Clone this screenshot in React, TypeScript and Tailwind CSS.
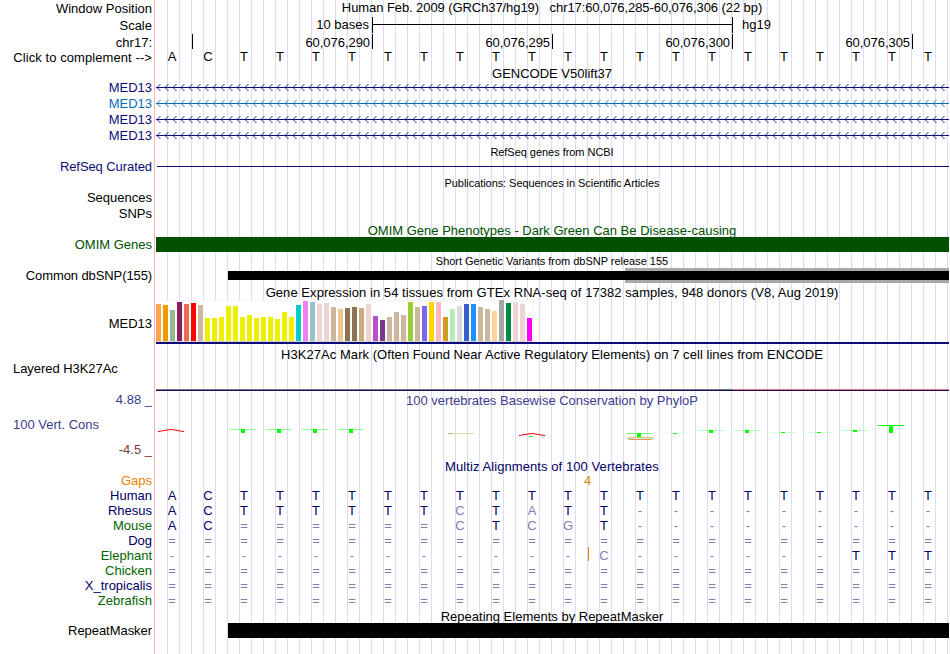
import React from "react";
import { clsx } from "clsx";

const GTEX: [number, string][] = [
  [37, "#ffa54f"], [36, "#ee9a00"], [31, "#8fbc8f"], [39, "#8b1c62"], [37, "#ee6a50"], [38, "#ff0000"],
  [36, "#cdb79e"], [23, "#eeee00"], [23, "#eeee00"], [24, "#eeee00"], [35, "#eeee00"], [35, "#eeee00"],
  [24, "#eeee00"], [26, "#eeee00"], [23, "#eeee00"], [24, "#eeee00"], [24, "#eeee00"], [22, "#eeee00"],
  [29, "#eeee00"], [24, "#eeee00"], [36, "#00cdcd"], [40, "#ee82ee"], [39, "#9ac0cd"], [37, "#eed5d2"],
  [38, "#eed5d2"], [34, "#cdb79e"], [32, "#eec591"], [33, "#8b7355"], [34, "#8b7355"], [33, "#cdaa7d"],
  [37, "#eed5d2"], [25, "#b452cd"], [21, "#7a378b"], [24, "#cdb79e"], [29, "#cdb79e"], [26, "#cdb79e"],
  [39, "#9acd32"], [34, "#cdb79e"], [35, "#7a67ee"], [39, "#ffd700"], [39, "#ffb6c1"], [24, "#cd9b1d"],
  [32, "#b4eeb4"], [35, "#d9d9d9"], [37, "#3a5fcd"], [37, "#1e90ff"], [34, "#cdb79e"], [32, "#cdb79e"],
  [30, "#ffd39b"], [41, "#a6a6a6"], [38, "#008b45"], [39, "#eed5d2"], [37, "#eed5d2"], [23, "#ff00ff"],
];

// lower case bases differ from the human sequence and are drawn dimmed
const ALIGNMENTS = [
  { name: "Human", seq: "ACTTTTTTTTTTTTTTTTTTTT", color: "text-[#000064]" },
  { name: "Rhesus", seq: "ACTTTTTTcTaTT---------", color: "text-[#000064]" },
  { name: "Mouse", seq: "AC======cTcgT---------", color: "text-[#006400]" },
  { name: "Dog", seq: "======================", color: "text-[#000064]" },
  { name: "Elephant", seq: "------------c------TTT", color: "text-[#006400]", insertAfter: 12 },
  { name: "Chicken", seq: "======================", color: "text-[#006400]" },
  { name: "X_tropicalis", seq: "======================", color: "text-[#000064]" },
  { name: "Zebrafish", seq: "======================", color: "text-[#006400]" },
];

const GENES = [
  { color: "#0c0c78", text: "text-[#0c0c78]" },
  { color: "#0c6cb4", text: "text-[#0c6cb4]" },
  { color: "#0c0c78", text: "text-[#0c0c78]" },
  { color: "#0c0c78", text: "text-[#0c0c78]" },
];

// x, top, height of the block and opacity of the line above it
const PHYLOP: [number, number, number, number][] = [
  [89, 38, 4, 0.45], [125, 38, 4, 0.45], [161, 38, 4, 0.45], [197, 38, 4, 0.45],
  [485, 42, 4, 0.55], [521, 42, 1, 0.12], [557, 39, 3, 0.25], [593, 39, 3, 0.25],
  [629, 41, 1, 0.15], [665, 41, 1, 0.15], [701, 39, 2, 0.25], [737, 34, 8, 1],
];

interface RowProps {
  className: string;
  label?: React.ReactNode;
  labelClass?: string;
  children?: React.ReactNode;
}

const Row = ({ className, label, labelClass, children }: RowProps) => (
  <div className={clsx("flex shrink-0", className)}>
    <div className={clsx("w-[154px] shrink-0 pr-[2px] text-right", labelClass)}>{label}</div>
    <div className="w-[795px] shrink-0">{children}</div>
  </div>
);

const Title = ({ className, children }: { className?: string; children: React.ReactNode }) => (
  <div className={clsx("pl-px text-center", className)}>{children}</div>
);

const Bases = ({ seq, color, dim }: { seq: string; color: string; dim?: string }) => (
  <div className="flex">
    {seq.split("").map((base, i) => (
      <span key={i} className={clsx("w-9 shrink-0 text-center", /[A-Z]/.test(base) ? color : dim)}>
        {base.toUpperCase()}
      </span>
    ))}
  </div>
);

const GeneLine = ({ color }: { color: string }) => {
  let arrows = "";
  for (let x = 3; x < 790; x += 8) {
    arrows += `M${x + 3.5} 4L${x} 7.5L${x + 3.5} 11`;
  }
  return (
    <svg width="795" height="16" className="block" fill="none" stroke={color}>
      <path d="M2 7.5H795" />
      <path d={arrows} strokeWidth="0.9" />
    </svg>
  );
};

const GtexChart = () => (
  <div className="pl-[2px]">
    <div className="flex h-[42px] w-[378px] items-end gap-[2px] border border-l-0 border-[#f3f3f3] border-b-[#d3d3d3] bg-white">
      {GTEX.map(([height, color], i) => (
        <div key={i} className="w-[5px] shrink-0" style={{ height, backgroundColor: color }} />
      ))}
    </div>
    <div className="h-[2px] bg-[#0c0c78]" />
  </div>
);

const Conservation = () => (
  <svg width="795" height="68" className="-mt-[17px] block" fill="none">
    {PHYLOP.map(([x, top, height, opacity]) => (
      <g key={x} fill="#00ff00">
        <rect x={x - 13} y={top} width="26" height="1" opacity={opacity} />
        <rect x={x - 2} y={top} width="4" height={height} />
      </g>
    ))}
    <path d="M4 40.6L13 39L17 38.5L21 39L30 40.6" stroke="#ff0000" />
    <path d="M365 44.6L374 43L378 42.5L382 43L391 44.6" stroke="#ff0000" />
    <rect x="375" y="45" width="4" height="1" fill="#00ff00" />
    <path d="M294 42.5H320" stroke="#b4b464" strokeOpacity="0.5" />
    <path d="M294 42.5H299" stroke="#a0a03c" strokeOpacity="0.6" />
    <path d="M473 47.5L477 46.5H497L500 47.5L497 48.5H477Z" fill="#e6e6c8" stroke="#b4aa46" strokeOpacity="0.6" />
    <path d="M475 48.5H497" stroke="#e66e50" strokeOpacity="0.6" />
  </svg>
);

const App = () => {
  return (
    <div className="relative isolate flex h-[654px] w-[950px] flex-col overflow-hidden bg-white font-['Liberation_Sans',sans-serif] text-[13px] leading-[15px] whitespace-pre text-black">
      {/* guidelines */}
      <div className="absolute inset-y-0 left-[154px] -z-10 w-px bg-[#ffb4b4]" />
      <div className="absolute inset-y-0 right-0 left-[167px] -z-10 bg-[repeating-linear-gradient(90deg,#dcdcfa_0px,#dcdcfa_1px,transparent_1px,transparent_12px)]" />

      <Row className="h-[17px]" label="Window Position" labelClass="pt-px">
        <Title className="tracking-[-0.08px]">
          {"Human Feb. 2009 (GRCh37/hg19)   chr17:60,076,285-60,076,306 (22 bp)"}
        </Title>
      </Row>
      <Row className="h-[17px]" label="Scale" labelClass="pt-px">
        <div className="flex">
          <div className="w-[218px] pr-[3px] text-right">10 bases</div>
          <div className="h-4 w-[361px] border-x border-black pt-[7px]">
            <div className="h-px w-full bg-black" />
          </div>
          <div className="pl-[9px]">hg19</div>
        </div>
      </Row>
      <Row className="h-[15px]" label="chr17:" labelClass="pt-px">
        <div className="flex h-[15px]">
          <div className="w-[39px] border-r border-black" />
          {["60,076,290", "60,076,295", "60,076,300", "60,076,305"].map((pos) => (
            <div key={pos} className="w-[180px] border-r border-black pt-px pr-[2px] text-right tracking-[-0.05px]">
              {pos}
            </div>
          ))}
        </div>
      </Row>
      <Row className="h-[17px]" label="Click to complement -->" labelClass="pt-px tracking-[0.08px]">
        <Bases seq="ACTTTTTTTTTTTTTTTTTTTT" color="text-black" />
      </Row>

      <Row className="h-[14px]">
        <Title>GENCODE V50lift37</Title>
      </Row>
      {GENES.map((gene, i) => (
        <Row key={i} className="h-4" label="MED13" labelClass={gene.text}>
          <GeneLine color={gene.color} />
        </Row>
      ))}

      <Row className="h-[15px]">
        <Title className="pt-px text-[11px] tracking-[-0.04px]">RefSeq genes from NCBI</Title>
      </Row>
      <Row className="h-[15px]" label="RefSeq Curated" labelClass="text-[#0c0c78] tracking-[-0.08px]">
        <div className="mt-[7px] ml-[3px] h-px bg-[#0c0c78]" />
      </Row>

      <Row className="h-4">
        <Title className="pt-[2px] text-[11px] tracking-[-0.06px]">Publications: Sequences in Scientific Articles</Title>
      </Row>
      <Row className="h-4" label="Sequences" />
      <Row className="h-4" label="SNPs" />

      <Row className="h-[15px]">
        <Title className="pt-px text-[#005000]">OMIM Gene Phenotypes - Dark Green Can Be Disease-causing</Title>
      </Row>
      <Row className="h-[15px]" label="OMIM Genes" labelClass="text-[#005000]">
        <div className="ml-[2px] h-[15px] bg-[#005000]" />
      </Row>

      <Row className="h-4">
        <Title className="pt-[2px] text-[11px] tracking-[-0.02px]">Short Genetic Variants from dbSNP release 155</Title>
      </Row>
      <Row className="h-[15px]" label="Common dbSNP(155)" labelClass="tracking-[-0.1px]">
        <div className="flex h-[15px] items-center pl-[74px]">
          <div className="h-[9px] w-[397px] bg-black" />
          <div className="h-[15px] flex-1 border-y-[3px] border-[#a8a8a8] bg-black" />
        </div>
      </Row>

      <Row className="h-[17px]">
        <Title className="pt-[2px] tracking-[0.06px]">
          Gene Expression in 54 tissues from GTEx RNA-seq of 17382 samples, 948 donors (V8, Aug 2019)
        </Title>
      </Row>
      <Row className="h-[44px]" label="MED13" labelClass="pt-4">
        <GtexChart />
      </Row>

      <Row className="h-[17px]">
        <Title className="pt-[3px] tracking-[0.05px]">
          H3K27Ac Mark (Often Found Near Active Regulatory Elements) on 7 cell lines from ENCODE
        </Title>
      </Row>
      <Row
        className="h-[28px]"
        label={<div className="pl-[13px] text-left tracking-[-0.05px]">Layered H3K27Ac</div>}
      />
      <Row className="h-[2px]">
        <div className="ml-[2px] flex h-px">
          <div className="w-[577px] bg-[#77778c]" />
          <div className="flex-1 bg-[#f07882]" />
        </div>
        <div className="ml-[2px] h-px bg-[#1c0a5a]" />
      </Row>

      <Row
        className="h-[68px]"
        labelClass="flex flex-col gap-[10px] pt-px text-[#3c3c8c]"
        label={
          <>
            <div>4.88 _</div>
            <div className="pl-[13px] text-left">100 Vert. Cons</div>
            <div className="text-[#783c3c]">-4.5 _</div>
          </>
        }
      >
        <Title className="pt-[2px] text-[#3c3c8c]">100 vertebrates Basewise Conservation by PhyloP</Title>
        <Conservation />
      </Row>

      <Row className="h-[14px]">
        <Title className="text-[#000064] tracking-[0.08px]">Multiz Alignments of 100 Vertebrates</Title>
      </Row>
      <Row className="h-[15px]" label="Gaps" labelClass="text-[#e68200]">
        <div className="pl-[430px] text-[#e68200]">4</div>
      </Row>
      {ALIGNMENTS.map(({ name, seq, color, insertAfter }) => (
        <Row key={name} className="h-[15px]" label={name} labelClass={color}>
          <div className="relative">
            <Bases seq={seq} color="text-[#000064]" dim="text-[#8080b0]" />
            {insertAfter && <div className="absolute -top-px left-[434px] h-[14px] w-px bg-[#e68200]" />}
          </div>
        </Row>
      ))}

      <Row className="h-[15px]">
        <Title className="pt-px">Repeating Elements by RepeatMasker</Title>
      </Row>
      <Row className="h-[15px]" label="RepeatMasker" labelClass="tracking-[-0.05px]">
        <div className="ml-[74px] h-[15px] bg-black" />
      </Row>
    </div>
  );
};

export default App;
